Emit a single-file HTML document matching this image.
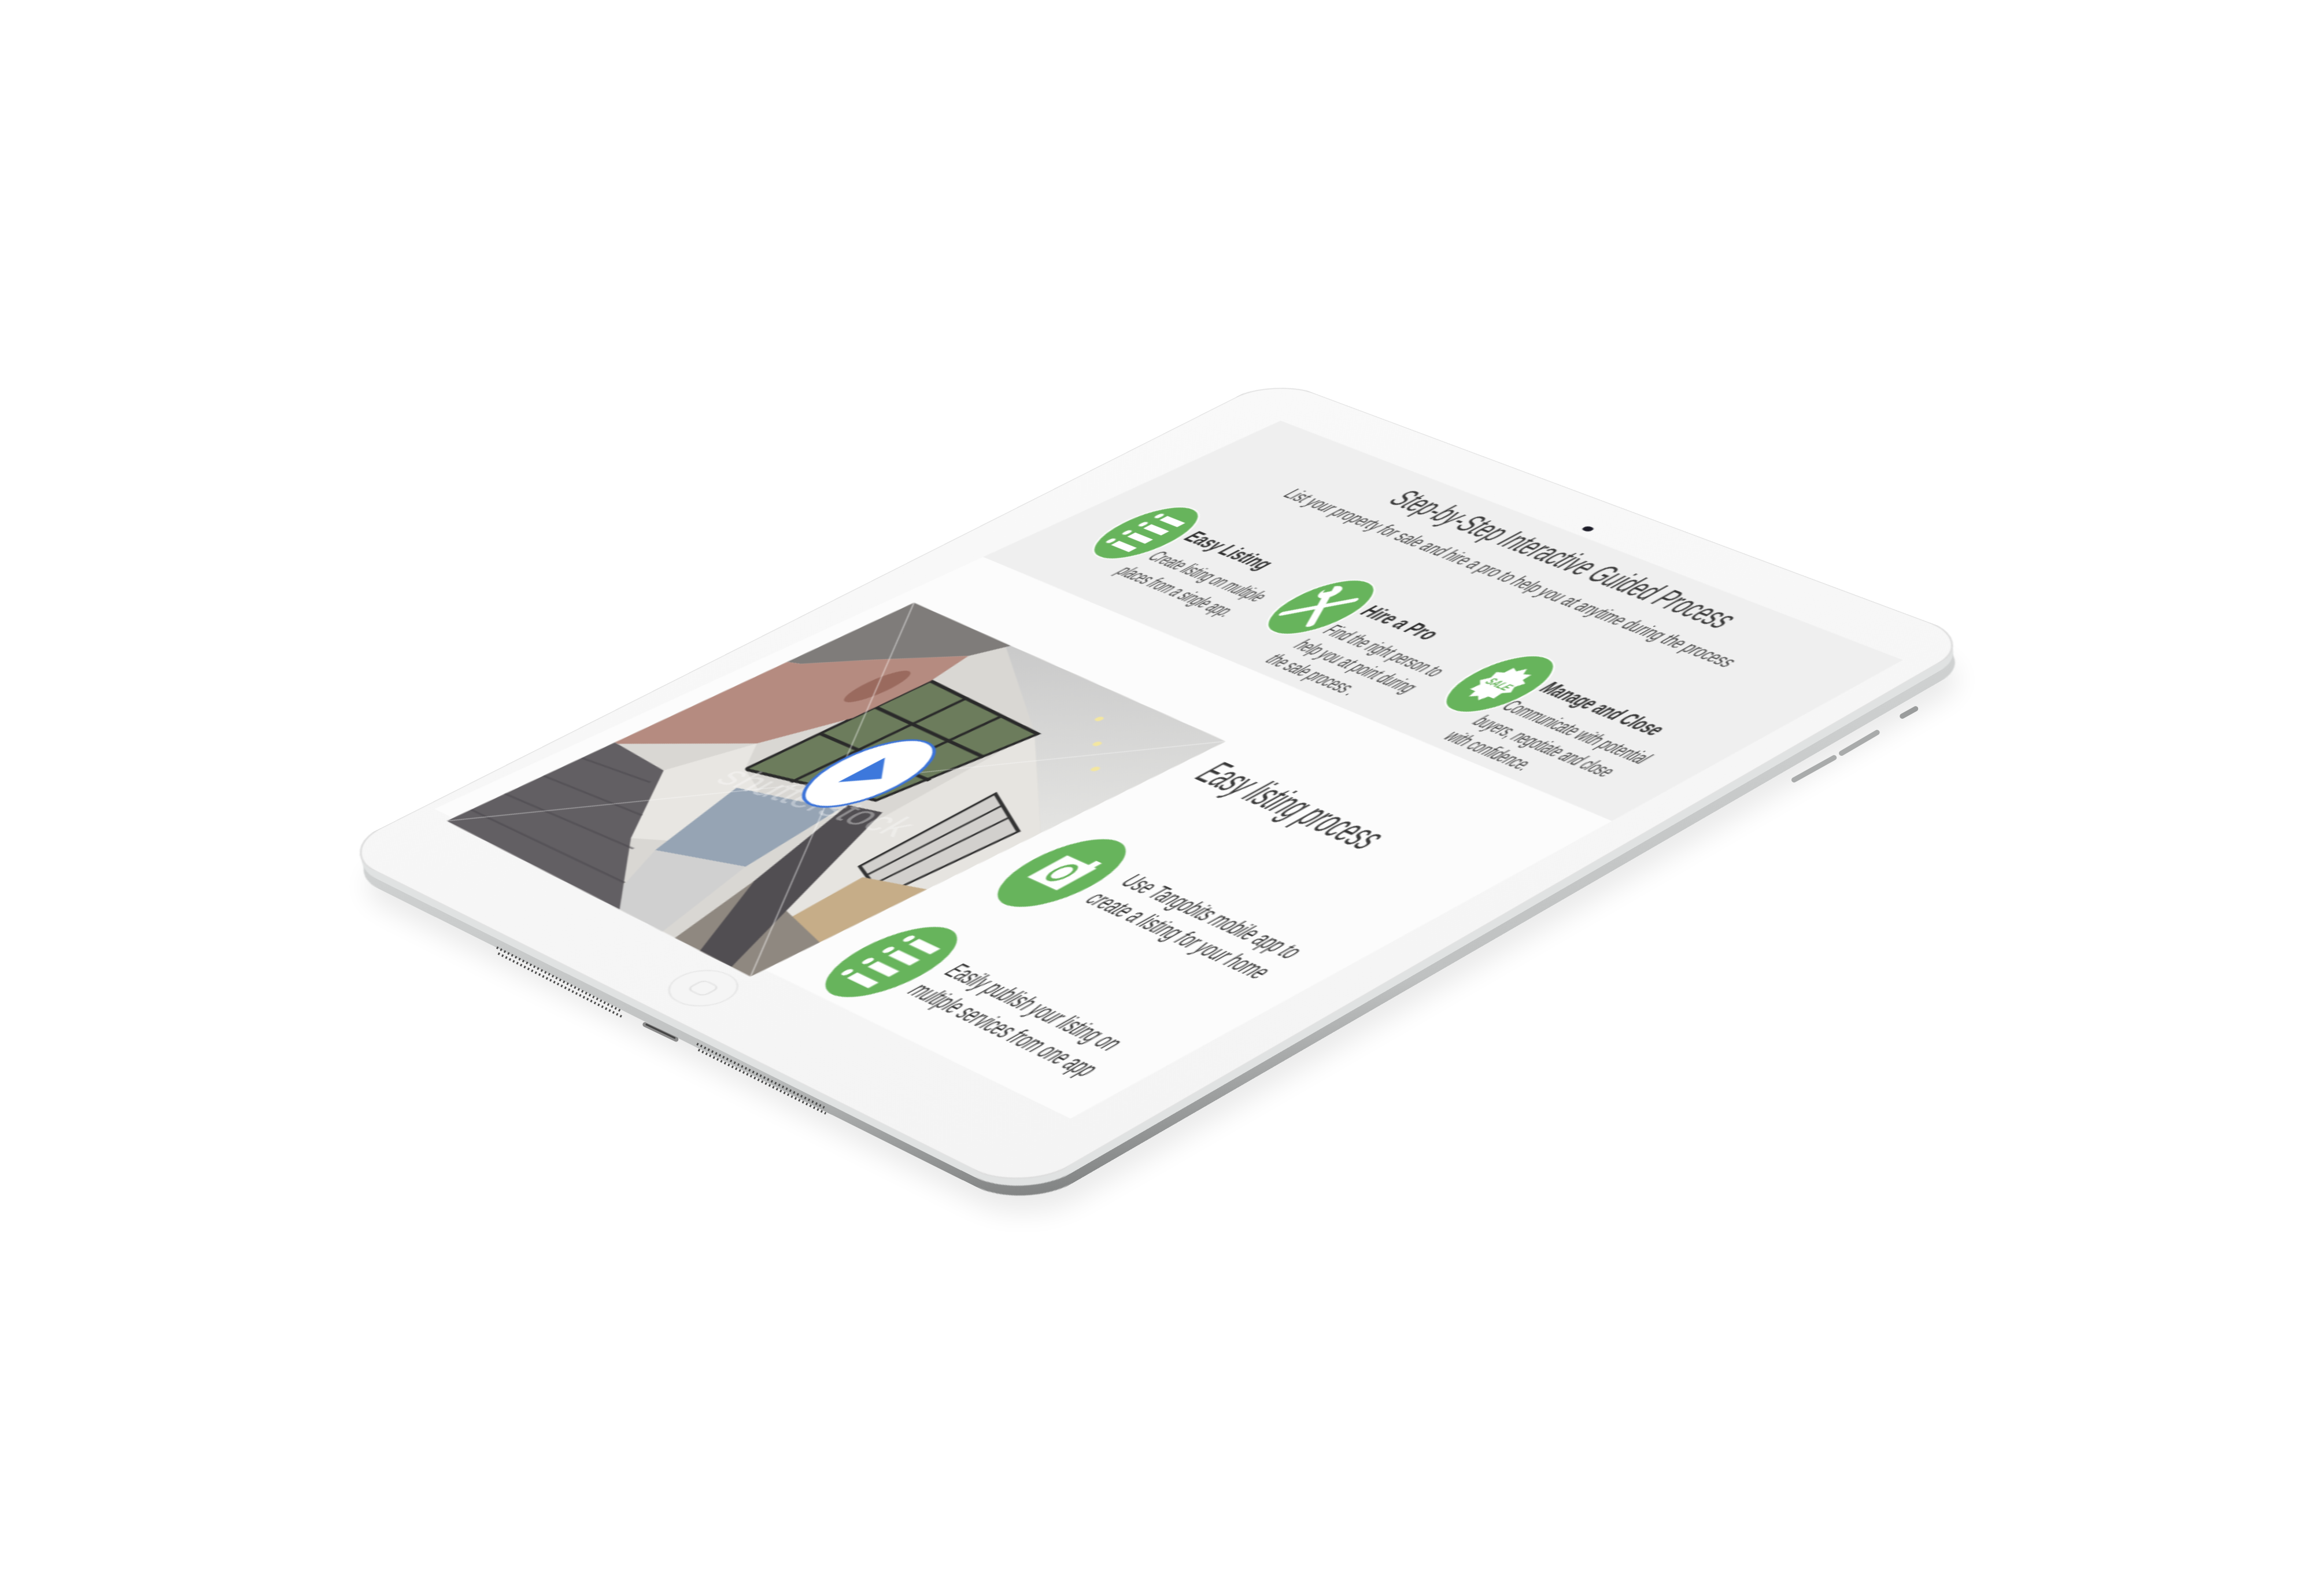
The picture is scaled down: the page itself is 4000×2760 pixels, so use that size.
<!DOCTYPE html>
<html><head><meta charset="utf-8">
<style>
html,body{margin:0;padding:0;background:#fff;}
body{width:4000px;height:2700px;position:relative;overflow:hidden;}
.m{position:absolute;left:0;top:0;width:706px;height:1000px;transform-origin:0 0;
transform:matrix3d(1.30686,0.50737,0,-0.00012229,-1.67774,0.67908,0,-0.000094357,0,0,1,0,2202.56,653.85,0,1);}
.wrap{position:absolute;left:0;top:0;width:4000px;height:2700px;}
svg text{font-family:"Liberation Sans",Arial,sans-serif;}
</style></head><body>

<!-- shadow -->
<div class="wrap" style="transform:translate(10px,60px);opacity:.08;filter:blur(22px)">
  <div class="m"><svg width="706" height="1000" viewBox="0 0 706 1000"><rect x="0" y="0" width="706" height="1000" rx="46" fill="#000"/></svg></div>
</div>

<!-- silver side -->
<div class="wrap" style="transform:translate(5px,30px)">
  <div class="m"><svg width="706" height="1000" viewBox="0 0 706 1000">
    <defs><linearGradient id="sil" x1="0" y1="0" x2="1" y2="1">
      <stop offset="0" stop-color="#8d8f8f"/><stop offset="0.5" stop-color="#cfd1d1"/><stop offset="0.8" stop-color="#bfc1c1"/><stop offset="1" stop-color="#7d7f7f"/></linearGradient></defs>
    <rect x="0" y="0" width="706" height="1000" rx="46" fill="url(#sil)"/>
  </svg></div>
</div>
<div class="wrap" style="transform:translate(2px,13px)">
  <div class="m"><svg width="706" height="1000" viewBox="0 0 706 1000">
    <rect x="0" y="0" width="706" height="1000" rx="46" fill="#e0e2e2"/>
  </svg></div>
</div>

<!-- front face -->
<div class="wrap">
 <div class="m">
  <svg width="706" height="1000" viewBox="0 0 706 1000">
   <defs>
    <linearGradient id="face" x1="0" y1="0" x2="1" y2="1">
      <stop offset="0" stop-color="#f9f9f9"/><stop offset="1" stop-color="#f4f4f4"/></linearGradient>
    <linearGradient id="ceil" x1="0" y1="0" x2="1" y2="1">
      <stop offset="0" stop-color="#c9c9c9"/><stop offset="1" stop-color="#e4e4e2"/></linearGradient>
   </defs>
   <rect x="0" y="0" width="706" height="1000" rx="46" fill="url(#face)" stroke="#dcdcdc" stroke-width="1.5"/>
   <circle cx="368" cy="43" r="4" fill="#1c1c28"/>
   <circle cx="350" cy="957" r="24" fill="#f5f5f5" stroke="#e6e6e6" stroke-width="1.2"/>
   <rect x="342" y="949" width="16" height="16" rx="5" fill="none" stroke="#dedede" stroke-width="1.2"/>

   <polygon points="57,53 683,58 677,375 39,370" fill="#efefef"/>
   <polygon points="39,370 677,375 665,912 9,911" fill="#fcfcfc"/>

   <text x="218" y="106" font-size="40" fill="#3a3a3a" textLength="330" lengthAdjust="spacingAndGlyphs">Step-by-Step Interactive Guided Process</text>
   <text x="148" y="149" font-size="24" fill="#444" textLength="443" lengthAdjust="spacingAndGlyphs">List your property for sale and hire a pro to help you at anytime during the process</text>

   <!-- feature 1 -->
   <ellipse cx="109" cy="261" rx="26" ry="52" fill="#67b45c" stroke="#fff" stroke-width="1.5"/>
   <g transform="translate(109,261) scale(0.5,1)" fill="#fff">
     <circle cx="-24" cy="-27" r="4.5"/><rect x="-14" y="-31" width="38" height="9"/>
     <circle cx="-24" cy="-9" r="4.5"/><rect x="-14" y="-13" width="38" height="9"/>
     <circle cx="-24" cy="9" r="4.5"/><rect x="-14" y="5" width="38" height="9"/>
     <circle cx="-24" cy="27" r="4.5"/><rect x="-14" y="23" width="38" height="9"/>
   </g>
   <text x="138" y="251" font-size="26" font-weight="bold" fill="#333" textLength="82" lengthAdjust="spacingAndGlyphs">Easy Listing</text>
   <text x="139" y="292" font-size="23" fill="#444" textLength="114" lengthAdjust="spacingAndGlyphs">Create listing on multiple</text>
   <text x="137" y="325" font-size="23" fill="#444" textLength="114" lengthAdjust="spacingAndGlyphs">places from a single app.</text>

   <!-- feature 2 -->
   <ellipse cx="297" cy="266" rx="26" ry="52" fill="#67b45c" stroke="#fff" stroke-width="1.5"/>
   <g transform="translate(297,266) scale(0.5,1)" fill="#fff" stroke="#fff">
     <line x1="-30" y1="26" x2="24" y2="-24" stroke-width="8" stroke-linecap="round"/>
     <line x1="-18" y1="-16" x2="26" y2="26" stroke-width="9" stroke-linecap="round"/>
     <circle cx="-22" cy="-22" r="12" stroke="none"/>
     <rect x="-30" y="-36" width="9" height="12" fill="#67b45c" stroke="none" transform="rotate(-45 -22 -22)"/>
   </g>
   <text x="326" y="256" font-size="26" font-weight="bold" fill="#333" textLength="68" lengthAdjust="spacingAndGlyphs">Hire a Pro</text>
   <text x="325" y="296" font-size="23" fill="#444" textLength="111" lengthAdjust="spacingAndGlyphs">Find the right person to</text>
   <text x="324" y="327" font-size="23" fill="#444" textLength="113" lengthAdjust="spacingAndGlyphs">help you at point during</text>
   <text x="323" y="357" font-size="23" fill="#444" textLength="84" lengthAdjust="spacingAndGlyphs">the sale process .</text>

   <!-- feature 3 -->
   <ellipse cx="481" cy="272" rx="26" ry="52" fill="#67b45c" stroke="#fff" stroke-width="1.5"/>
   <g transform="translate(481,272) scale(0.5,1)">
     <polygon fill="#fff" points="0,-30 7,-22 17,-25 18,-15 28,-12 23,-3 30,5 21,10 23,20 13,20 9,29 0,24 -9,29 -13,20 -23,20 -21,10 -30,5 -23,-3 -28,-12 -18,-15 -17,-25 -7,-22"/>
     <text x="0" y="6" font-size="15" font-weight="bold" font-style="italic" fill="#67b45c" text-anchor="middle">SALE</text>
   </g>
   <text x="509" y="262" font-size="26" font-weight="bold" fill="#333" textLength="109" lengthAdjust="spacingAndGlyphs">Manage and Close</text>
   <text x="506" y="300" font-size="23" fill="#444" textLength="132" lengthAdjust="spacingAndGlyphs">Communicate with potential</text>
   <text x="505" y="331" font-size="23" fill="#444" textLength="126" lengthAdjust="spacingAndGlyphs">buyers, negotiate and close</text>
   <text x="504" y="361" font-size="23" fill="#444" textLength="76" lengthAdjust="spacingAndGlyphs">with confidence.</text>

   <!-- video -->
   <g transform="matrix(3.341,0.075,-0.218,4.595,51.6,457.5)">
     <rect x="0" y="0" width="100" height="100" fill="#d9d7d3"/>
     <polygon points="30,0 100,0 100,40 66,18" fill="url(#ceil)"/>
     <polygon points="66,18 100,40 100,100 90,100 70,56" fill="#e6e4e0"/>
     <polygon points="31,17 67,18 63,50 31,57" fill="#6c7c5c"/>
     <g stroke="#2a2a2a" stroke-width="0.9" fill="none">
       <polygon points="31,17 67,18 63,50 31,57"/>
       <line x1="43" y1="17" x2="43" y2="55"/><line x1="55" y1="18" x2="54" y2="52"/>
       <line x1="31" y1="29" x2="66" y2="29"/><line x1="31" y1="41" x2="65" y2="40"/>
     </g>
     <polygon points="80,36 96,42 95,70 82,66" fill="#d2d0cd" stroke="#333" stroke-width="0.7"/>
     <line x1="85" y1="38" x2="86" y2="67" stroke="#333" stroke-width="0.6"/>
     <line x1="90" y1="40" x2="90" y2="69" stroke="#333" stroke-width="0.6"/>
     <polygon points="86,68 100,64 100,86 88,88" fill="#c6ad88"/>
     <polygon points="70,80 100,86 100,100 76,100" fill="#8f8880"/>
     <circle cx="72" cy="8" r="0.8" fill="#f3e6a0"/><circle cx="80" cy="14" r="0.8" fill="#f3e6a0"/><circle cx="88" cy="20" r="0.8" fill="#f3e6a0"/>
     <polygon points="0,0 32,0 28.5,7 14,18 3,27 0,28" fill="#7f7c7a"/>
     <polygon points="0,28 3,27 14,18 28.5,7 31,17 31,34 24,50 1,65 0,65" fill="#b58b80"/>
     <ellipse cx="24" cy="24" rx="3" ry="7" fill="#9a6a5e"/>
     <polygon points="24,50 31,57 40,60 44,80 36,84 18,66" fill="#e8e6e2"/>
     <polygon points="36,62 60,56 64,78 44,84" fill="#96a4b4"/>
     <polygon points="44,84 64,78 72,100 54,100" fill="#d0d0d0"/>
     <polygon points="0,65 18,66 36,84 58,100 0,100" fill="#625f63"/>
     <polygon points="60,54 68,52 94,100 84,100 70,80" fill="#514e52"/>
     <g stroke="#4e4b50" stroke-width="0.5" opacity="0.6">
       <line x1="0" y1="72" x2="20" y2="70"/><line x1="0" y1="80" x2="30" y2="78"/>
       <line x1="0" y1="88" x2="40" y2="86"/><line x1="0" y1="95" x2="50" y2="94"/>
     </g>
     <text x="30" y="63" font-size="9" fill="#fff" opacity="0.35" transform="rotate(-8 30 63)">shutterstock</text>
     <g stroke="#fff" stroke-width="0.25" opacity="0.5"><line x1="0" y1="100" x2="100" y2="0"/><line x1="0" y1="0" x2="100" y2="100"/></g>
   </g>
   <ellipse cx="218" cy="667" rx="30" ry="60" fill="#fff" stroke="#3b73d9" stroke-width="2.5"/>
   <g transform="translate(218,667) scale(0.5,1)">
     <polygon points="-16,-24 26,0 -16,24" fill="#3d78dc"/>
   </g>

   <!-- lower section -->
   <text x="405" y="520" font-size="46" fill="#3a3a3a" textLength="164" lengthAdjust="spacingAndGlyphs">Easy listing process</text>

   <ellipse cx="429" cy="680" rx="29" ry="58" fill="#67b45c"/>
   <g transform="translate(429,680) scale(0.56,1.12)">
     <rect x="-26" y="-18" width="52" height="36" fill="#fff"/>
     <rect x="12" y="-25" width="10" height="8" fill="#fff"/>
     <circle cx="0" cy="0" r="11" fill="none" stroke="#67b45c" stroke-width="4"/>
   </g>
   <text x="471" y="665" font-size="27" fill="#3a3a3a" textLength="162" lengthAdjust="spacingAndGlyphs">Use Tangobits mobile app to</text>
   <text x="469" y="699" font-size="27" fill="#3a3a3a" textLength="166" lengthAdjust="spacingAndGlyphs">create a listing for your home</text>

   <ellipse cx="425" cy="846" rx="29" ry="58" fill="#67b45c"/>
   <g transform="translate(425,846) scale(0.56,1.12)" fill="#fff">
     <circle cx="-24" cy="-27" r="4.5"/><rect x="-14" y="-31" width="38" height="9"/>
     <circle cx="-24" cy="-9" r="4.5"/><rect x="-14" y="-13" width="38" height="9"/>
     <circle cx="-24" cy="9" r="4.5"/><rect x="-14" y="5" width="38" height="9"/>
     <circle cx="-24" cy="27" r="4.5"/><rect x="-14" y="23" width="38" height="9"/>
   </g>
   <text x="464" y="834" font-size="27" fill="#3a3a3a" textLength="159" lengthAdjust="spacingAndGlyphs">Easily publish your listing on</text>
   <text x="463" y="869" font-size="27" fill="#3a3a3a" textLength="171" lengthAdjust="spacingAndGlyphs">multiple services from one app</text>
  </svg>
 </div>
</div>

<svg class="wrap" width="4000" height="2700" viewBox="0 0 1560 1053" style="position:absolute;left:0;top:0">
  <g stroke="#4a4a4a" stroke-width="1.6" stroke-dasharray="1.1 1.7" fill="none">
    <line x1="335" y1="639" x2="419" y2="682"/>
    <line x1="336" y1="643" x2="420" y2="686"/>
    <line x1="470" y1="704" x2="556" y2="747"/>
    <line x1="471" y1="708" x2="557" y2="751"/>
  </g>
  <line x1="435" y1="691" x2="456" y2="701" stroke="#8a8a8a" stroke-width="3.2" stroke-linecap="round"/>
  <line x1="436" y1="691" x2="455" y2="700" stroke="#444" stroke-width="1.2" stroke-linecap="round"/>
  <g stroke-linecap="round">
    <line x1="1210" y1="526" x2="1237" y2="511" stroke="#a9abab" stroke-width="3.5"/>
    <line x1="1242" y1="508" x2="1266" y2="494" stroke="#a9abab" stroke-width="3.5"/>
    <line x1="1283" y1="483" x2="1292" y2="478" stroke="#9a9c9c" stroke-width="3.5"/>
  </g>
</svg>
</body></html>
